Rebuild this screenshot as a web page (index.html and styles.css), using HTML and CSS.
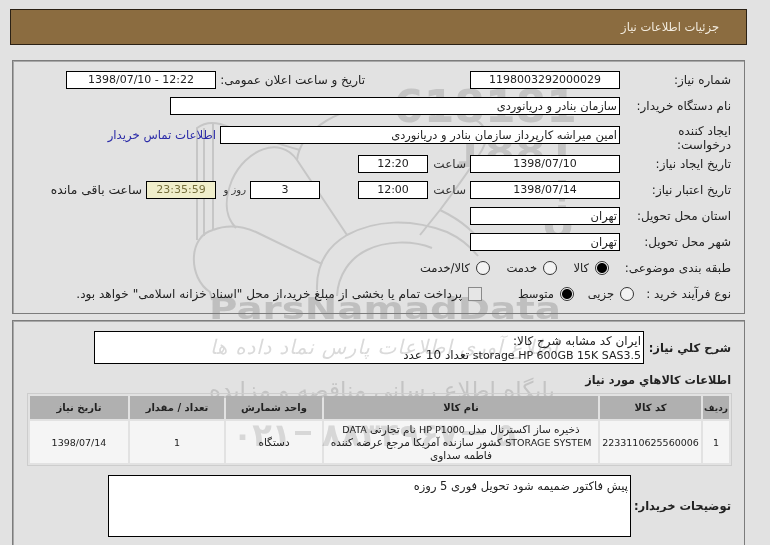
FILE: index.html
```html
<!DOCTYPE html>
<html lang="fa" dir="rtl">

<head>
    <meta charset="UTF-8">
    <title>جزئیات اطلاعات نیاز</title>
    <link rel="stylesheet" href="styles.css">
</head>

<body>
    <svg class="watermark" width="770" height="545" viewBox="0 0 770 545" aria-hidden="true">
        <g class="wm-lines">
            <path d="M197 240 L197 128 C205 122 212 122 220 124 C250 134 280 145 300 150" />
            <path d="M204 236 L204 128" />
            <path d="M213 230 L213 124" />
            <path d="M347 235 L297 160 C280 135 245 150 232 180 C222 205 228 220 236 228" />
            <path d="M213 230 C188 236 188 278 210 292 L212 300" />
            <path d="M213 230 C228 224 242 226 256 232 L322 264" />
            <path d="M317 290 C316 262 330 245 347 235 C375 220 410 218 447 232 C460 238 470 246 478 256" />
            <path d="M337 296 C338 275 350 258 367 250 C385 241 412 240 432 248" />
            <path d="M297 160 C300 135 330 108 380 106 C400 106 420 110 440 118" />
            <path d="M420 235 L440 210 C455 190 470 170 482 150 C490 136 486 122 470 118" />
            <path d="M440 210 C465 222 478 235 486 250" />
        </g>
        <g class="wm-digits">
            <text x="485" y="122" text-anchor="middle" direction="ltr">618181</text>
            <text x="515" y="167" text-anchor="middle" direction="ltr">1881</text>
            <text x="562" y="213" text-anchor="middle" direction="ltr">!</text>
            <text x="558" y="238" text-anchor="middle" direction="ltr">o</text>
        </g>
        <text class="wm-brand" x="385" y="319" text-anchor="middle" textLength="352" lengthAdjust="spacingAndGlyphs" direction="ltr">ParsNamadData</text>
        <text class="wm-site" x="382" y="398" text-anchor="middle">پایگاه اطلاع رسانی مناقصه و مزایده</text>
    </svg>

    <div class="page">
        <div class="title-bar">جزئیات اطلاعات نیاز</div>

        <div class="panel panel-info">
            <div class="row">
                <div class="label">شماره نیاز:</div>
                <div class="box w150 center num">1198003292000029</div>
                <div class="label-public">تاریخ و ساعت اعلان عمومی:</div>
                <div class="box w150 center num ltr">1398/07/10 - 12:22</div>
            </div>
            <div class="row">
                <div class="label">نام دستگاه خریدار:</div>
                <div class="box w450">سازمان بنادر و دریانوردی</div>
            </div>
            <div class="row row-tall">
                <div class="label label-two">ایجاد کننده<br>درخواست:</div>
                <div class="box w400">امین میراشه کارپرداز سازمان بنادر و دریانوردی</div>
                <a class="contact" href="#">اطلاعات تماس خریدار</a>
            </div>
            <div class="row">
                <div class="label">تاریخ ایجاد نیاز:</div>
                <div class="box w150 center num">1398/07/10</div>
                <div class="unit">ساعت</div>
                <div class="box w70 center num">12:20</div>
            </div>
            <div class="row">
                <div class="label">تاریخ اعتبار نیاز:</div>
                <div class="box w150 center num">1398/07/14</div>
                <div class="unit">ساعت</div>
                <div class="box w70 center num">12:00</div>
                <div class="box w70 center num days">3</div>
                <div class="unit unit-day">روز و</div>
                <div class="box w70 center num countdown">23:35:59</div>
                <div class="remain">ساعت باقی مانده</div>
            </div>
            <div class="row">
                <div class="label">استان محل تحویل:</div>
                <div class="box w150">تهران</div>
            </div>
            <div class="row">
                <div class="label">شهر محل تحویل:</div>
                <div class="box w150">تهران</div>
            </div>
            <div class="row">
                <div class="label label-radio">طبقه بندی موضوعی:</div>
                <label class="option opt-48"><input type="radio" name="cat" checked>کالا</label>
                <label class="option opt-63"><input type="radio" name="cat">خدمت</label>
                <label class="option"><input type="radio" name="cat">کالا/خدمت</label>
            </div>
            <div class="row">
                <div class="label label-buy">نوع فرآیند خرید :</div>
                <label class="option opt-56"><input type="radio" name="buy">جزیی</label>
                <label class="option opt-88"><input type="radio" name="buy" checked>متوسط</label>
                <label class="option option-long"><input type="checkbox">پرداخت تمام یا بخشی از مبلغ خرید،از محل "اسناد خزانه اسلامی" خواهد بود.</label>
            </div>
        </div>

        <div class="panel panel-items">
            <div class="row">
                <div class="label-bold label-87">شرح کلي نياز:</div>
                <div class="box box-desc">ایران کد مشابه شرح کالا:<br><span class="num">storage HP 600GB 15K SAS3.5</span> تعداد 10 عدد</div>
            </div>
            <div class="section-title">اطلاعات کالاهاي مورد نياز</div>
            <table class="items">
                <colgroup>
                    <col class="c-no">
                    <col class="c-code">
                    <col class="c-name">
                    <col class="c-unit">
                    <col class="c-qty">
                    <col class="c-date">
                </colgroup>
                <thead>
                    <tr>
                        <th class="th-no">رديف</th>
                        <th>کد کالا</th>
                        <th>نام کالا</th>
                        <th>واحد شمارش</th>
                        <th>تعداد / مقدار</th>
                        <th>تاریخ نیاز</th>
                    </tr>
                </thead>
                <tbody>
                    <tr>
                        <td class="cell-num">1</td>
                        <td class="cell-num">2233110625560006</td>
                        <td>ذخیره ساز اکسترنال مدل <span class="cell-num">HP P1000</span> نام تجارتی <span class="cell-num">DATA</span><br><span class="cell-num">STORAGE SYSTEM</span> کشور سازنده آمریکا مرجع عرضه کننده<br>فاطمه سداوی</td>
                        <td>دستگاه</td>
                        <td class="cell-num">1</td>
                        <td class="cell-num">1398/07/14</td>
                    </tr>
                </tbody>
            </table>
            <div class="row row-notes">
                <div class="label-bold label-100">توضیحات خریدار:</div>
                <div class="box box-notes">پیش فاکتور ضمیمه شود تحویل فوری 5 روزه</div>
            </div>
        </div>
    </div>

    <!-- this part of the watermark shows through the white box and the table -->
    <svg class="watermark-top" width="770" height="545" viewBox="0 0 770 545" aria-hidden="true">
        <text class="wm-script" x="384" y="354" text-anchor="middle" textLength="348" lengthAdjust="spacing">اطلاع آوری اطلاعات پارس نماد داده ها</text>
        <g class="wm-phone">
            <text x="262" y="446" text-anchor="middle">۰۲۱</text>
            <text x="390" y="446" text-anchor="middle">۸۸۳۴۹۶۷</text>
            <text x="506" y="446" text-anchor="middle">۵</text>
            <rect x="295" y="431" width="16" height="4" />
            <rect x="462" y="431" width="22" height="4" />
        </g>
    </svg>
</body>

</html>
```

FILE: styles.css
```css
* {
    margin: 0;
    padding: 0;
    box-sizing: border-box;
}

html,
body {
    height: 545px;
    overflow: hidden;
}

body {
    position: relative;
    background: #e2e2e2;
    color: #222;
    font-family: "DejaVu Sans", sans-serif;
    font-size: 12px;
    line-height: 14px;
}

/* watermark sits behind the opaque boxes */
.watermark {
    position: absolute;
    top: 0;
    left: 0;
    z-index: 0;
}

.watermark-top {
    position: absolute;
    top: 0;
    left: 0;
    z-index: 2;
    mix-blend-mode: multiply;
    pointer-events: none;
}

.wm-lines path {
    fill: none;
    stroke: #c6c6c6;
    stroke-width: 2;
}

.wm-digits text {
    fill: #c4c4c4;
    font-size: 44px;
    font-weight: bold;
}

.wm-brand {
    fill: #bfbfbf;
    font-size: 30px;
    font-weight: bold;
}

.wm-script {
    fill: #dadada;
    font-size: 20px;
    font-style: italic;
}

.wm-site {
    fill: #c4c4c4;
    font-size: 23px;
}

.wm-phone {
    fill: #e0e0e0;
    font-size: 32px;
    font-weight: bold;
}

.page {
    position: relative;
    z-index: 1;
    width: 737px;
    margin: 9px 23px 0 0;
}

.title-bar {
    height: 36px;
    padding-right: 27px;
    background: #8b6c40;
    border: 1px solid #2b2115;
    color: #f3ecdf;
    font-size: 11.5px;
    line-height: 34px;
}

.panel {
    margin: 15px 2px 0;
    border: 1px solid #7c7c7c;
    box-shadow: inset 1px 1px 0 #a8a8a8;
}

.panel-info {
    display: flex;
    flex-direction: column;
    gap: 8px;
    height: 254px;
    padding: 10px 13px 0 0;
}

.panel-items {
    height: 225px;
    margin-top: 6px;
    padding: 10px 13px 0 0;
    border-bottom: 0;
}

.row {
    display: flex;
    align-items: center;
    gap: 4px;
    height: 18px;
}

.row-tall {
    height: 24px;
}

.label {
    flex: none;
    width: 107px;
    white-space: nowrap;
}

.label-two {
    margin-top: 5px;
    line-height: 14px;
}

.label-radio {
    width: 122px;
    margin-left: -4px;
}

.label-buy {
    width: 97px;
    margin-left: -4px;
}

.label-public {
    flex: none;
    width: 145px;
    margin-right: 101px;
    white-space: nowrap;
}

.box {
    flex: none;
    height: 18px;
    padding: 0 2px;
    background: #fff;
    border: 1px solid #000;
    color: #222;
    font-size: 11.5px;
    line-height: 16px;
    white-space: nowrap;
    overflow: hidden;
}

.num {
    font-size: 11px;
}

.ltr {
    direction: ltr;
}

.center {
    text-align: center;
}

.w70 {
    width: 70px;
}

.w150 {
    width: 150px;
}

.w400 {
    width: 400px;
}

.w450 {
    width: 450px;
}

.unit {
    flex: none;
    width: 34px;
    color: #333;
    white-space: nowrap;
}

.unit-day {
    width: 26px;
    font-size: 10px;
}

.days {
    margin-right: 34px;
}

.countdown {
    background: #f0eecb;
    color: #77703c;
}

.remain {
    flex: none;
    font-size: 12.3px;
    white-space: nowrap;
}

.contact {
    color: #2a2aa8;
    font-size: 11.7px;
    text-decoration: none;
    white-space: nowrap;
}

.option {
    display: flex;
    flex: none;
    align-items: center;
    gap: 6px;
    font-size: 11.5px;
    white-space: nowrap;
}

.option-long {
    font-size: 12.1px;
}

.opt-48 {
    width: 48px;
}

.opt-56 {
    width: 56px;
}

.opt-63 {
    width: 63px;
}

.opt-88 {
    width: 88px;
}

.option input {
    flex: none;
    width: 14px;
    height: 14px;
    appearance: none;
    background: #f3f3f3;
    border: 1px solid #333;
    border-radius: 50%;
}

.option input:checked {
    background: radial-gradient(circle, #000 0, #000 4.5px, #f3f3f3 5.5px);
}

.option input[type="checkbox"] {
    background: #e6e6e6;
    border-color: #8a8a8a;
    border-radius: 0;
}

.label-bold {
    flex: none;
    color: #222;
    font-size: 11.5px;
    font-weight: bold;
}

.label-87 {
    width: 87px;
}

.label-100 {
    width: 100px;
}

.panel-items .row {
    gap: 0;
}

.panel-items .row:first-child {
    height: 33px;
}

.box-desc {
    width: 550px;
    height: 33px;
    font-size: 12px;
    line-height: 14px;
    padding-top: 2px;
}

.section-title {
    margin-top: 10px;
    font-size: 11.3px;
    font-weight: bold;
}

.items {
    width: 704px;
    margin: 5px -1px 0 0;
    background: transparent;
    border: 1px solid #cdcdcd;
    border-spacing: 2px;
    table-layout: fixed;
}

.c-no {
    width: 26px;
}

.c-code {
    width: 101px;
}

.c-name {
    width: 274px;
}

.c-unit {
    width: 96px;
}

.c-qty {
    width: 94px;
}

.c-date {
    width: 98px;
}

.items th {
    height: 23px;
    background: #b0b0b0;
    color: #222;
    font-size: 10px;
    text-align: center;
}

.items .th-no {
    font-size: 9px;
}

.items td {
    height: 42px;
    background: #f5f5f5;
    font-size: 10.5px;
    line-height: 13px;
    text-align: center;
    white-space: nowrap;
}

.items .cell-num {
    font-size: 9.5px;
}

.row-notes {
    height: 62px;
    margin-top: 9px;
}

.box-notes {
    width: 523px;
    height: 62px;
    padding: 2px 2px 0;
    line-height: 16px;
}
```
